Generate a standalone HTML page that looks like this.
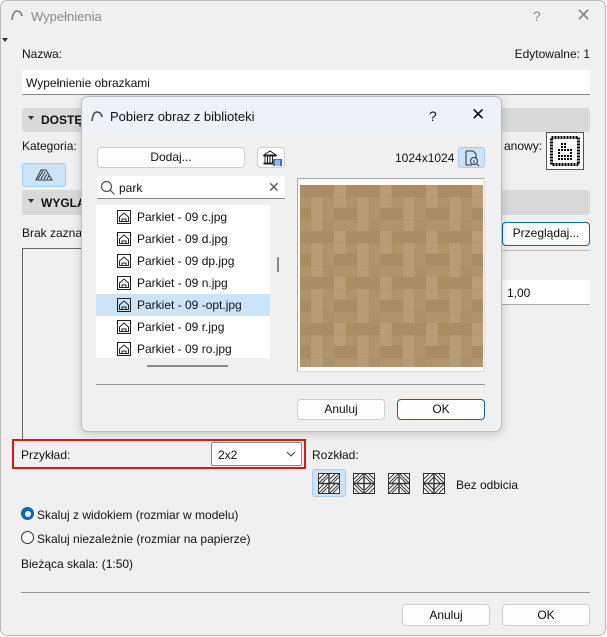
<!DOCTYPE html>
<html><head><meta charset="utf-8"><style>
*{box-sizing:border-box;margin:0;padding:0}
body{width:607px;height:637px;overflow:hidden;background:#fff;font-family:"Liberation Sans",sans-serif;font-size:12px;color:#111;position:relative}
.a{position:absolute}
.win{left:0;top:0;width:606px;height:636px;background:#f0f0f0;border:1px solid #b8b8b8;border-radius:7px}
.btn{position:absolute;background:#fdfdfd;border:1px solid #cfcfcf;border-radius:4px;text-align:center;font-size:12px}
.bar{position:absolute;background:#d9d9d9;border-radius:3px;font-weight:bold;font-size:12px}
.inp{position:absolute;background:#fff;border-bottom:1px solid #8a8a8a}
.row{position:absolute;left:0;width:174px;height:22px;line-height:22px}
.row span{position:absolute;left:41px;font-size:12px}
.row svg{position:absolute;left:21px;top:4px}
</style></head><body>
<div class="a win"></div>
<svg class="a" style="left:10px;top:8px" width="14" height="14" viewBox="0 0 14 14"><path d="M2 12 Q3 3 7 3 Q11 3 12 8" fill="none" stroke="#777" stroke-width="1.6"/></svg>
<div class="a" style="left:31px;top:9px;font-size:13px;color:#888">Wypełnienia</div>
<div class="a" style="left:533px;top:8px;font-size:14px;color:#888">?</div>
<div class="a" style="left:576px;top:5px;font-size:18px;color:#888">✕</div>
<div class="a" style="left:2px;top:38px;width:0;height:0;border-left:3px solid transparent;border-right:3px solid transparent;border-top:4px solid #333"></div>
<div class="a" style="left:22px;top:47px">Nazwa:</div>
<div class="a" style="right:17px;top:47px">Edytowalne: 1</div>
<div class="inp" style="left:22px;top:70px;width:568px;height:25px;padding:6px 4px">Wypełnienie obrazkami</div>
<div class="bar" style="left:22px;top:108px;width:568px;height:24px;padding:5px 0 0 19px">DOSTĘP</div>
<div class="a" style="left:28px;top:116px;border-left:3px solid transparent;border-right:3px solid transparent;border-top:4px solid #333"></div>
<div class="a" style="left:22px;top:139px">Kategoria:</div>
<div class="a" style="left:504px;top:139px">anowy:</div>
<div class="a" style="left:546px;top:132px;width:38px;height:38px;background:#fff;border:1px solid #555;padding:2px">
<svg width="32" height="32" viewBox="0 0 32 32"><rect x="2.5" y="2.5" width="27" height="27" fill="none" stroke="#000" stroke-width="3" stroke-dasharray="2 1"/><g fill="#000">
<rect x="12" y="8" width="2" height="2"/><rect x="15" y="8" width="2" height="2"/><rect x="12" y="11" width="2" height="2"/><rect x="15" y="11" width="2" height="2"/>
<rect x="9" y="14" width="2" height="2"/><rect x="12" y="14" width="2" height="2"/><rect x="15" y="14" width="2" height="2"/><rect x="18" y="14" width="2" height="2"/><rect x="21" y="14" width="2" height="2"/>
<rect x="9" y="17" width="2" height="2"/><rect x="21" y="17" width="2" height="2"/>
<rect x="9" y="20" width="2" height="2"/><rect x="12" y="20" width="2" height="2"/><rect x="15" y="20" width="2" height="2"/><rect x="18" y="20" width="2" height="2"/><rect x="21" y="20" width="2" height="2"/>
<rect x="9" y="23" width="2" height="2"/><rect x="12" y="23" width="2" height="2"/><rect x="15" y="23" width="2" height="2"/><rect x="18" y="23" width="2" height="2"/><rect x="21" y="23" width="2" height="2"/>
</g></svg></div>
<div class="a" style="left:22px;top:163px;width:44px;height:24px;background:#cce4f7;border:1px solid #a6cdf0;border-radius:3px">
<svg style="margin:5px 0 0 12px" width="18" height="12" viewBox="0 0 18 12"><path d="M1 11 L6 1 H11 L17 11 Z" fill="none" stroke="#333"/><path d="M3 10L8 2M6 10L10 3M9 10L12 5M12 10L14 7" stroke="#333"/></svg></div>
<div class="bar" style="left:22px;top:190px;width:568px;height:25px;padding:6px 0 0 19px">WYGLĄD</div>
<div class="a" style="left:28px;top:199px;border-left:3px solid transparent;border-right:3px solid transparent;border-top:4px solid #333"></div>
<div class="a" style="left:22px;top:226px">Brak zaznaczenia</div>
<div class="btn" style="left:502px;top:222px;width:88px;height:24px;border-color:#0067c0;line-height:21px">Przeglądaj...</div>
<div class="a" style="left:502px;top:250px;width:88px;height:1px;background:#bbb"></div>
<div class="a" style="left:22px;top:248px;width:80px;height:193px;border-left:1px solid #666;border-top:1px solid #666"></div>
<div class="inp" style="left:502px;top:280px;width:88px;height:25px;padding:6px 5px;border-bottom:1px solid #aaa">1,00</div>

<div class="a" style="left:81px;top:96px;width:421px;height:336px;background:#f0f0f0;border:1px solid #bbb;border-radius:7px;box-shadow:0 2px 10px rgba(0,0,0,.18);overflow:hidden">
 <div class="a" style="left:0;top:0;width:421px;height:38px;background:#eef1f7"></div>
</div>
<svg class="a" style="left:90px;top:109px" width="14" height="14" viewBox="0 0 14 14"><path d="M2 12 Q3 3 7 3 Q11 3 12 8" fill="none" stroke="#444" stroke-width="1.6"/></svg>
<div class="a" style="left:110px;top:109px;font-size:13px">Pobierz obraz z biblioteki</div>
<div class="a" style="left:429px;top:108px;font-size:14px">?</div>
<div class="a" style="left:471px;top:105px;font-size:17px">✕</div>
<div class="btn" style="left:97px;top:147px;width:148px;height:21px;line-height:19px">Dodaj...</div>
<div class="btn" style="left:257px;top:147px;width:28px;height:21px">
<svg width="26" height="19" viewBox="0 0 26 19"><path d="M6 7 L12 3 L18 7Z M6 7h12v1H6z M7 8v7M9.5 8v7M12 8v7M14.5 8v7M6 15h12v1H6z" fill="none" stroke="#222" stroke-width="1"/><rect x="15" y="11" width="9" height="7" fill="#2e7ad1"/><path d="M17 13h5M17 15h5M17 17h5" stroke="#fff"/></svg></div>
<div class="a" style="left:395px;top:151px">1024x1024</div>
<div class="a" style="left:458px;top:147px;width:27px;height:21px;background:#cce4f7;border:1px solid #a6cdf0;border-radius:3px">
<svg style="margin:1px 0 0 4px" width="18" height="18" viewBox="0 0 18 18"><path d="M3 2h7l3 3v5M3 2v14h6" fill="none" stroke="#333"/><circle cx="11" cy="12" r="3.5" fill="none" stroke="#333"/><path d="M13.5 14.5L16 17M11 11v3" stroke="#333"/></svg></div>
<div class="inp" style="left:97px;top:176px;width:188px;height:23px;padding:5px 0 0 22px">park</div>
<svg class="a" style="left:100px;top:180px" width="16" height="16" viewBox="0 0 16 16"><circle cx="6.5" cy="6.5" r="5" fill="none" stroke="#555" stroke-width="1.2"/><path d="M10 10l4.5 4.5" stroke="#555" stroke-width="1.2"/></svg>
<div class="a" style="left:268px;top:179px;font-size:14px;color:#555">✕</div>
<div class="a" style="left:96px;top:205px;width:174px;height:153px;background:#fff;overflow:hidden">
 <div class="row" style="top:1px"><svg width="14" height="14" viewBox="0 0 14 14"><rect x=".5" y=".5" width="13" height="13" fill="none" stroke="#222"/><path d="M2.5 7L7 3l4.5 4v4.5h-9z M5 9h4v2.5H5z" fill="none" stroke="#222"/></svg><span>Parkiet - 09 c.jpg</span></div>
 <div class="row" style="top:23px"><svg width="14" height="14" viewBox="0 0 14 14"><rect x=".5" y=".5" width="13" height="13" fill="none" stroke="#222"/><path d="M2.5 7L7 3l4.5 4v4.5h-9z M5 9h4v2.5H5z" fill="none" stroke="#222"/></svg><span>Parkiet - 09 d.jpg</span></div>
 <div class="row" style="top:45px"><svg width="14" height="14" viewBox="0 0 14 14"><rect x=".5" y=".5" width="13" height="13" fill="none" stroke="#222"/><path d="M2.5 7L7 3l4.5 4v4.5h-9z M5 9h4v2.5H5z" fill="none" stroke="#222"/></svg><span>Parkiet - 09 dp.jpg</span></div>
 <div class="row" style="top:67px"><svg width="14" height="14" viewBox="0 0 14 14"><rect x=".5" y=".5" width="13" height="13" fill="none" stroke="#222"/><path d="M2.5 7L7 3l4.5 4v4.5h-9z M5 9h4v2.5H5z" fill="none" stroke="#222"/></svg><span>Parkiet - 09 n.jpg</span></div>
 <div class="row" style="top:89px;background:#cce4f7"><svg width="14" height="14" viewBox="0 0 14 14"><rect x=".5" y=".5" width="13" height="13" fill="none" stroke="#222"/><path d="M2.5 7L7 3l4.5 4v4.5h-9z M5 9h4v2.5H5z" fill="none" stroke="#222"/></svg><span>Parkiet - 09 -opt.jpg</span></div>
 <div class="row" style="top:111px"><svg width="14" height="14" viewBox="0 0 14 14"><rect x=".5" y=".5" width="13" height="13" fill="none" stroke="#222"/><path d="M2.5 7L7 3l4.5 4v4.5h-9z M5 9h4v2.5H5z" fill="none" stroke="#222"/></svg><span>Parkiet - 09 r.jpg</span></div>
 <div class="row" style="top:133px"><svg width="14" height="14" viewBox="0 0 14 14"><rect x=".5" y=".5" width="13" height="13" fill="none" stroke="#222"/><path d="M2.5 7L7 3l4.5 4v4.5h-9z M5 9h4v2.5H5z" fill="none" stroke="#222"/></svg><span>Parkiet - 09 ro.jpg</span></div>
</div>
<div class="a" style="left:277px;top:257px;width:2px;height:15px;background:#888"></div>
<div class="a" style="left:147px;top:365px;width:81px;height:2px;background:#888"></div>
<div class="a" style="left:297px;top:178px;width:188px;height:194px;background:#fafafa;border:1px solid #aaa;border-right-color:#ddd;border-bottom-color:#ddd"></div>
<svg class="a" style="left:300px;top:185px" width="183" height="182">
<defs><pattern id="w" width="46" height="46" patternUnits="userSpaceOnUse" x="-12" y="0">
<rect width="46" height="46" fill="#b0946c"/>
<rect x="0" y="0" width="12" height="23" fill="#b99d76"/>
<rect x="12" y="0" width="34" height="12" fill="#aa8d63"/>
<rect x="23" y="12" width="12" height="34" fill="#b89c75"/>
<rect x="0" y="23" width="23" height="12" fill="#a98c62"/>
<rect x="35" y="35" width="11" height="11" fill="#ae9169"/>
<path d="M0 12h46M0 23h23M23 35h23M12 0v23M35 0v46M23 12v34" stroke="#9f8359" stroke-width=".5" opacity=".4"/>
</pattern></defs><rect width="183" height="182" fill="url(#w)"/></svg>
<div class="a" style="left:96px;top:384px;width:389px;height:1px;background:#999"></div>
<div class="btn" style="left:297px;top:399px;width:88px;height:21px;line-height:19px">Anuluj</div>
<div class="btn" style="left:397px;top:399px;width:88px;height:21px;line-height:19px;border-color:#0067c0">OK</div>

<div class="a" style="left:12px;top:439px;width:294px;height:30px;border:2px solid #e81010"></div>
<div class="a" style="left:21px;top:448px">Przykład:</div>
<div class="a" style="left:211px;top:442px;width:91px;height:24px;background:#fff;border:1px solid #888;border-radius:2px;padding:5px 0 0 6px">2x2</div>
<svg class="a" style="left:286px;top:451px" width="10" height="6" viewBox="0 0 10 6"><path d="M1 1l4 4 4-4" fill="none" stroke="#444"/></svg>
<div class="a" style="left:312px;top:448px">Rozkład:</div>
<div class="a" style="left:312px;top:469px;width:34px;height:28px;background:#cce4f7;border:1px solid #a6cdf0;border-radius:3px"></div>
<svg class="a" style="left:318px;top:473px" width="22" height="21" viewBox="0 0 22 21"><rect x=".5" y=".5" width="21" height="20" fill="#fff" stroke="#333"/><path d="M11 0v21M0 10.5h22" stroke="#333" stroke-width="1.5"/><path d="M1 6l5-5M1 10l9-9M4 10l6-6M12 6l5-5M12 10l9-9M15 10l6-6M1 16l5-5M1 20l9-9M4 20l6-6M12 16l5-5M12 20l9-9M15 20l6-6" stroke="#333"/></svg>
<svg class="a" style="left:353px;top:473px" width="22" height="21" viewBox="0 0 22 21"><rect x=".5" y=".5" width="21" height="20" fill="#fff" stroke="#333"/><path d="M11 0v21M0 10.5h22" stroke="#333" stroke-width="1.5"/><path d="M1 6l5-5M1 10l9-9M4 10l6-6M21 6l-5-5M21 10l-9-9M18 10l-6-6M1 15l5 5M1 11l9 9M4 11l6 6M21 15l-5 5M21 11l-9 9M18 11l-6 6" stroke="#333"/></svg>
<svg class="a" style="left:388px;top:473px" width="22" height="21" viewBox="0 0 22 21"><rect x=".5" y=".5" width="21" height="20" fill="#fff" stroke="#333"/><path d="M11 0v21M0 10.5h22" stroke="#333" stroke-width="1.5"/><path d="M1 6l5-5M1 10l9-9M4 10l6-6M21 6l-5-5M21 10l-9-9M18 10l-6-6M1 16l5-5M1 20l9-9M4 20l6-6M21 16l-5-5M21 20l-9-9M18 20l-6-6" stroke="#333"/></svg>
<svg class="a" style="left:423px;top:473px" width="22" height="21" viewBox="0 0 22 21"><rect x=".5" y=".5" width="21" height="20" fill="#fff" stroke="#333"/><path d="M11 0v21M0 10.5h22" stroke="#333" stroke-width="1.5"/><path d="M10 1l-9 9M6 1L1 6M21 10l-9-9M21 6l-5-5M1 11l9 9M1 15l5 5M12 20l9-9M16 20l5-5M11 4l6.5 6.5L11 17 4.5 10.5z" fill="none" stroke="#333"/></svg>
<div class="a" style="left:456px;top:478px">Bez odbicia</div>
<div class="a" style="left:21px;top:507px;width:13px;height:13px;border-radius:50%;background:#0067c0"><div style="margin:3.5px;width:6px;height:6px;border-radius:50%;background:#fff"></div></div>
<div class="a" style="left:37px;top:508px">Skaluj z widokiem (rozmiar w modelu)</div>
<div class="a" style="left:21px;top:531px;width:13px;height:13px;border-radius:50%;border:1px solid #333;background:#f8f8f8"></div>
<div class="a" style="left:37px;top:532px">Skaluj niezależnie (rozmiar na papierze)</div>
<div class="a" style="left:21px;top:557px">Bieżąca skala: (1:50)</div>
<div class="a" style="left:21px;top:592px;width:569px;height:1px;background:#999"></div>
<div class="btn" style="left:402px;top:604px;width:88px;height:22px;line-height:20px">Anuluj</div>
<div class="btn" style="left:502px;top:604px;width:88px;height:22px;line-height:20px">OK</div>
</body></html>
